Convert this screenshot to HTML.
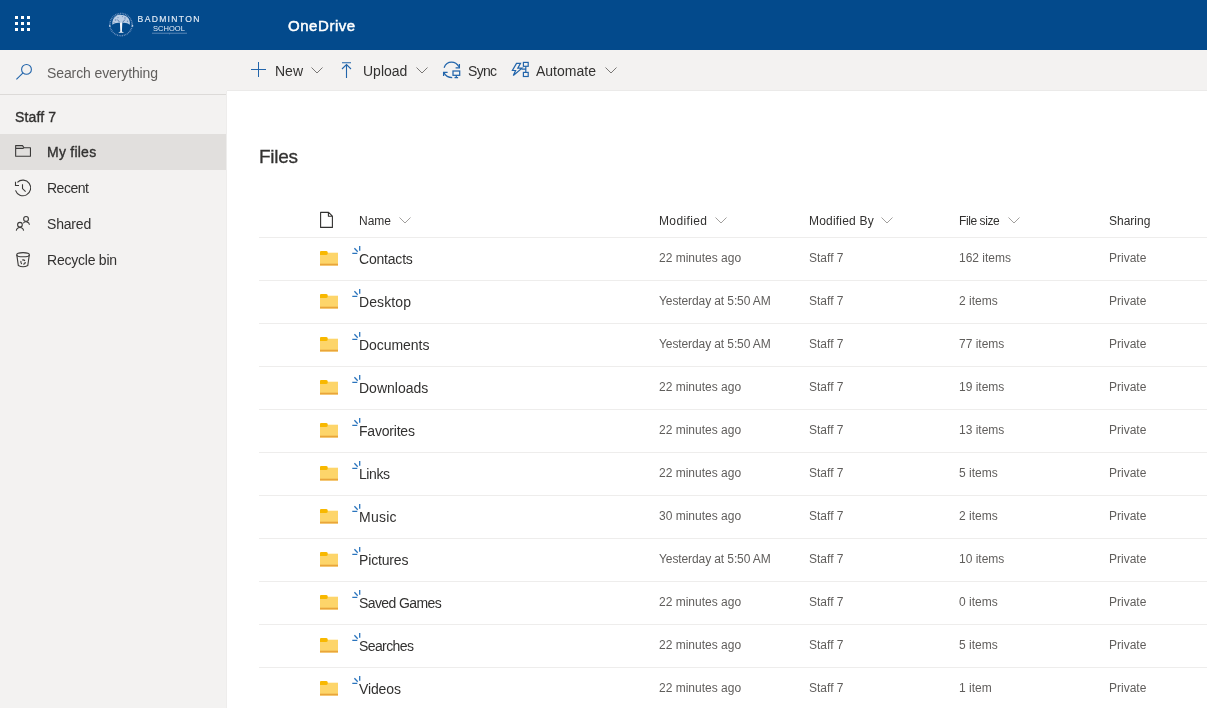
<!DOCTYPE html>
<html><head><meta charset="utf-8">
<style>
*{margin:0;padding:0;box-sizing:border-box}
html,body{width:1207px;height:708px;overflow:hidden;background:#fff;font-family:"Liberation Sans",sans-serif;color:#323130}
.a{position:absolute;white-space:nowrap;line-height:1;-webkit-font-smoothing:antialiased}
body{will-change:transform}
#hdr{position:absolute;left:0;top:0;width:1207px;height:50px;background:#034a8c}
#cmd{position:absolute;left:0;top:50px;width:1207px;height:41px;background:#f3f2f1}
#side{position:absolute;left:0;top:91px;width:227px;height:617px;background:#f3f2f1}
.divl{position:absolute;left:0;top:94px;width:227px;height:1px;background:#dcdad8}
.cbl{position:absolute;left:227px;top:90px;width:980px;height:1px;background:#ebeae9}
.vsh{position:absolute;left:226px;top:91px;width:1px;height:617px;background:#eeedec}
.sel{position:absolute;left:0;top:134px;width:227px;height:36px;background:#e1dfdd}
.t14{font-size:14px}
.t12{font-size:12px}
.sb{-webkit-text-stroke:0.35px #323130}
.sep{position:absolute;left:259px;width:948px;height:1px;background:#eeedec}
.fold{position:absolute;left:320px;width:18px;height:15px}
.spark{position:absolute;left:352px;width:9px;height:9px}
.nm{font-size:14px;color:#323130}
.cell{font-size:12px;color:#605e5c}
</style></head><body>
<div id="hdr"></div>
<div id="cmd"></div>
<div id="side"></div>
<div class="divl"></div>
<div class="sel"></div>
<div class="cbl"></div>
<div class="vsh"></div>

<svg class="a" style="left:15px;top:16px" width="16" height="16" viewBox="0 0 16 16" fill="#fff"><rect x="0" y="0" width="3" height="3"/><rect x="6" y="0" width="3" height="3"/><rect x="12" y="0" width="3" height="3"/><rect x="0" y="6" width="3" height="3"/><rect x="6" y="6" width="3" height="3"/><rect x="12" y="6" width="3" height="3"/><rect x="0" y="12" width="3" height="3"/><rect x="6" y="12" width="3" height="3"/><rect x="12" y="12" width="3" height="3"/></svg>
<svg class="a" style="left:104px;top:8px" width="100" height="34" viewBox="0 0 100 34">
<circle cx="17" cy="16.6" r="11.1" fill="none" stroke="#6f92bf" stroke-width="1.5" stroke-dasharray="0.9 0.8"/>
<circle cx="5.8" cy="17.9" r="0.8" fill="#c8d8ec"/><circle cx="28.5" cy="17.9" r="0.8" fill="#c8d8ec"/>
<path d="M8.3 16.8C7.9 13 9.5 9.5 12 8C14 6.6 16 6.8 17.3 7C19.5 6.6 22 7.5 23.8 9.5C25.6 11.5 26.2 14.2 25.8 16.8C24.2 15.6 22 14.6 19.5 14.7L17.2 15.4L14.8 14.7C12.3 14.6 10 15.6 8.3 16.8Z" fill="#b9cce4"/>
<circle cx="11.5" cy="12" r="0.8" fill="#6688b6"/><circle cx="21" cy="10" r="0.8" fill="#6688b6"/><circle cx="14" cy="9.6" r="0.7" fill="#7393bd"/><circle cx="23.5" cy="13.3" r="0.7" fill="#6a8cba"/><circle cx="10" cy="14.6" r="0.6" fill="#7393bd"/><circle cx="18.5" cy="8.6" r="0.6" fill="#7393bd"/>
<path d="M13.3 11.5L16.2 14.8M21 11.5L18.2 14.8" stroke="#4f76aa" stroke-width="0.9"/>
<path d="M15.9 14.6L16.3 23.4L14.2 24.8H20L17.9 23.4L18.3 14.6Z" fill="#f2f5fa"/>
<text x="33.6" y="13.8" font-family="Liberation Sans" font-size="8.6" fill="#e4ecf6" letter-spacing="1.3" stroke="#e4ecf6" stroke-width="0.15">BADMINTON</text>
<text x="49" y="22.8" font-family="Liberation Sans" font-size="7.5" fill="#e4ecf6" letter-spacing="0.05">SCHOOL</text>
<rect x="48" y="24.8" width="35" height="0.7" fill="#7f9fc7"/><rect x="65.3" y="25.5" width="0.7" height="0.8" fill="#7f9fc7"/>
</svg>
<div class="a" style="left:288px;top:18px;font-size:15px;letter-spacing:0.55px;color:#fff;-webkit-text-stroke:0.5px #fff">OneDrive</div>
<svg class="a" style="left:10px;top:58px" width="30" height="30" viewBox="0 0 30 30" fill="none" stroke="#2265ab" stroke-width="1.1">
<circle cx="16.5" cy="11.4" r="4.9"/><path d="M13 14.9 L6.4 21.4"/></svg>
<div class="a t14" style="left:47px;top:66px;color:#605e5c;letter-spacing:-0.11px">Search everything</div>
<svg class="a" style="left:251px;top:62px" width="15" height="15" viewBox="0 0 15 15" stroke="#2265ab" stroke-width="1" fill="none"><path d="M7.5 0V15M0 7.5H15"/></svg>
<div class="a t14" style="left:275px;top:64px">New</div>
<svg class="a" style="left:311px;top:67px" width="12" height="7" viewBox="0 0 12 7" stroke="#797775" stroke-width="1" fill="none"><path d="M0.5 0.5L6 6L11.5 0.5"/></svg>
<svg class="a" style="left:341px;top:62px" width="11" height="16" viewBox="0 0 11 16" stroke="#2265ab" stroke-width="1.1" fill="none"><path d="M1 0.8H10M5.5 2.5V16M1 7L5.5 2.5L10 7"/></svg>
<div class="a t14" style="left:363px;top:64px">Upload</div>
<svg class="a" style="left:416px;top:67px" width="12" height="7" viewBox="0 0 12 7" stroke="#797775" stroke-width="1" fill="none"><path d="M0.5 0.5L6 6L11.5 0.5"/></svg>
<svg class="a" style="left:438px;top:58px" width="28" height="24" viewBox="0 0 28 24" stroke="#2265ab" stroke-width="1.25" fill="none">
<path d="M6.1 9.7C7.5 6 10.5 4.2 13.6 4.2C16.5 4.2 19.2 5.8 20.9 8.8"/><path d="M21.4 6.1V9.8H17.6"/>
<path d="M9.6 14.4H5.6V18"/><path d="M5.8 14.6C7.5 17.8 10.5 19.5 14.2 19.5"/>
<rect x="15" y="13" width="6.7" height="4.3"/><path d="M18.3 17.3V19.5M16.5 19.5H20.1"/></svg>
<div class="a t14" style="left:468px;top:64px;letter-spacing:-0.67px">Sync</div>
<svg class="a" style="left:508px;top:58px" width="28" height="24" viewBox="0 0 28 24" stroke="#2265ab" stroke-width="1.2" fill="none" stroke-linejoin="miter">
<path d="M8.5 5.4H12.5L9.8 10.2H14L5.3 17.5L7.6 12.5H4.4Z"/>
<rect x="15.4" y="4.4" width="4.8" height="3.9"/><rect x="15.4" y="14.4" width="4.8" height="4.1"/>
<path d="M17.8 8.3V14.4M13.5 11.2H17.8"/></svg>
<div class="a t14" style="left:536px;top:64px">Automate</div>
<svg class="a" style="left:605px;top:67px" width="12" height="7" viewBox="0 0 12 7" stroke="#797775" stroke-width="1" fill="none"><path d="M0.5 0.5L6 6L11.5 0.5"/></svg>
<div class="a sb" style="left:15px;top:110px;font-size:14px;letter-spacing:0.13px">Staff 7</div>
<svg class="a" style="left:10px;top:139px" width="26" height="26" viewBox="0 0 26 26" stroke="#3b3a39" stroke-width="1.1" fill="none" stroke-linejoin="round">
<path d="M5.65 6.6H12.5L14 8.8H20.45V17.3H5.65Z M5.65 9.4H12.8L14 8.8"/></svg>
<div class="a sb" style="left:47px;top:145px;font-size:14px;letter-spacing:0.24px">My files</div>
<svg class="a" style="left:10px;top:175px" width="26" height="26" viewBox="0 0 26 26" stroke="#3b3a39" stroke-width="1.1" fill="none">
<path d="M7.4 7.4A7.8 7.8 0 1 1 5.5 15.4"/><path d="M5.5 6.8V10.5H9"/><path d="M12.5 9.2V13.6L15.6 16.6"/></svg>
<div class="a t14" style="left:47px;top:181px;letter-spacing:-0.5px">Recent</div>
<svg class="a" style="left:10px;top:211px" width="26" height="26" viewBox="0 0 26 26" stroke="#3b3a39" stroke-width="1.1" fill="none">
<circle cx="16.05" cy="7.9" r="2.4"/><path d="M13.2 12.2A3.5 3.5 0 0 1 19.5 13.8"/>
<circle cx="9.95" cy="13.7" r="2.35"/><path d="M6.3 19.6A3.7 3.7 0 0 1 13.6 19.6"/></svg>
<div class="a t14" style="left:47px;top:217px;letter-spacing:-0.18px">Shared</div>
<svg class="a" style="left:10px;top:247px" width="26" height="26" viewBox="0 0 26 26" stroke="#3b3a39" stroke-width="1.1" fill="none">
<ellipse cx="13.05" cy="7.7" rx="6.3" ry="2.1"/><path d="M6.8 7.9L8.3 18.4Q13.05 21 17.8 18.4L19.3 7.9"/>
<circle cx="13.05" cy="15.1" r="2.2" stroke-dasharray="3 1.2"/></svg>
<div class="a t14" style="left:47px;top:253px;letter-spacing:-0.23px">Recycle bin</div>
<div class="a" style="left:259px;top:147px;font-size:19px;letter-spacing:-0.25px;-webkit-text-stroke:0.3px #323130">Files</div>
<svg class="a" style="left:314px;top:206px" width="26" height="26" viewBox="0 0 26 26" stroke="#323130" stroke-width="1.1" fill="none" stroke-linejoin="round">
<path d="M6.6 6.4H14.6L18.4 10.2V21.4H6.6Z M14.4 6.4V10.3H18.4"/></svg>
<div class="a t12" style="left:359px;top:215px">Name</div>
<svg class="a" style="left:399px;top:217px" width="12" height="7" viewBox="0 0 12 7" stroke="#a19f9d" stroke-width="1" fill="none"><path d="M0.5 0.5L6 6L11.5 0.5"/></svg>
<div class="a t12" style="left:659px;top:215px;letter-spacing:0.36px">Modified</div>
<svg class="a" style="left:715px;top:217px" width="12" height="7" viewBox="0 0 12 7" stroke="#a19f9d" stroke-width="1" fill="none"><path d="M0.5 0.5L6 6L11.5 0.5"/></svg>
<div class="a t12" style="left:809px;top:215px;letter-spacing:0.2px">Modified By</div>
<svg class="a" style="left:881px;top:217px" width="12" height="7" viewBox="0 0 12 7" stroke="#a19f9d" stroke-width="1" fill="none"><path d="M0.5 0.5L6 6L11.5 0.5"/></svg>
<div class="a t12" style="left:959px;top:215px;letter-spacing:-0.41px">File size</div>
<svg class="a" style="left:1008px;top:217px" width="12" height="7" viewBox="0 0 12 7" stroke="#a19f9d" stroke-width="1" fill="none"><path d="M0.5 0.5L6 6L11.5 0.5"/></svg>
<div class="a t12" style="left:1109px;top:215px">Sharing</div>
<div class="sep" style="top:237px"></div>
<svg class="fold a" style="top:251px" viewBox="0 0 18 15"><path d="M0 1.7H18V14.5H0Z" fill="#fdd56a"/><path d="M0 1Q0 0 1 0H6.3Q7.8 0 7.8 2Q7.8 4 6.3 4H0Z" fill="#f8b800"/><rect x="0" y="12.7" width="18" height="1.8" fill="#e9a53a"/></svg>
<svg class="spark a" style="top:246px" viewBox="0 0 9 9" stroke="#2a74bd" stroke-width="1.3" fill="none"><path d="M0.3 7.4H5.3M2.4 2.2L5.7 5.7M7.7 0.1V4.7"/></svg>
<div class="a nm" style="left:359px;top:252px;letter-spacing:-0.2px">Contacts</div>
<div class="a cell" style="left:659px;top:252px">22 minutes ago</div>
<div class="a cell" style="left:809px;top:252px">Staff 7</div>
<div class="a cell" style="left:959px;top:252px">162 items</div>
<div class="a cell" style="left:1109px;top:252px">Private</div>
<div class="sep" style="top:280px"></div>
<svg class="fold a" style="top:294px" viewBox="0 0 18 15"><path d="M0 1.7H18V14.5H0Z" fill="#fdd56a"/><path d="M0 1Q0 0 1 0H6.3Q7.8 0 7.8 2Q7.8 4 6.3 4H0Z" fill="#f8b800"/><rect x="0" y="12.7" width="18" height="1.8" fill="#e9a53a"/></svg>
<svg class="spark a" style="top:289px" viewBox="0 0 9 9" stroke="#2a74bd" stroke-width="1.3" fill="none"><path d="M0.3 7.4H5.3M2.4 2.2L5.7 5.7M7.7 0.1V4.7"/></svg>
<div class="a nm" style="left:359px;top:295px;letter-spacing:0.1px">Desktop</div>
<div class="a cell" style="left:659px;top:295px;letter-spacing:-0.1px">Yesterday at 5:50 AM</div>
<div class="a cell" style="left:809px;top:295px">Staff 7</div>
<div class="a cell" style="left:959px;top:295px">2 items</div>
<div class="a cell" style="left:1109px;top:295px">Private</div>
<div class="sep" style="top:323px"></div>
<svg class="fold a" style="top:337px" viewBox="0 0 18 15"><path d="M0 1.7H18V14.5H0Z" fill="#fdd56a"/><path d="M0 1Q0 0 1 0H6.3Q7.8 0 7.8 2Q7.8 4 6.3 4H0Z" fill="#f8b800"/><rect x="0" y="12.7" width="18" height="1.8" fill="#e9a53a"/></svg>
<svg class="spark a" style="top:332px" viewBox="0 0 9 9" stroke="#2a74bd" stroke-width="1.3" fill="none"><path d="M0.3 7.4H5.3M2.4 2.2L5.7 5.7M7.7 0.1V4.7"/></svg>
<div class="a nm" style="left:359px;top:338px;letter-spacing:-0.05px">Documents</div>
<div class="a cell" style="left:659px;top:338px;letter-spacing:-0.1px">Yesterday at 5:50 AM</div>
<div class="a cell" style="left:809px;top:338px">Staff 7</div>
<div class="a cell" style="left:959px;top:338px">77 items</div>
<div class="a cell" style="left:1109px;top:338px">Private</div>
<div class="sep" style="top:366px"></div>
<svg class="fold a" style="top:380px" viewBox="0 0 18 15"><path d="M0 1.7H18V14.5H0Z" fill="#fdd56a"/><path d="M0 1Q0 0 1 0H6.3Q7.8 0 7.8 2Q7.8 4 6.3 4H0Z" fill="#f8b800"/><rect x="0" y="12.7" width="18" height="1.8" fill="#e9a53a"/></svg>
<svg class="spark a" style="top:375px" viewBox="0 0 9 9" stroke="#2a74bd" stroke-width="1.3" fill="none"><path d="M0.3 7.4H5.3M2.4 2.2L5.7 5.7M7.7 0.1V4.7"/></svg>
<div class="a nm" style="left:359px;top:381px">Downloads</div>
<div class="a cell" style="left:659px;top:381px">22 minutes ago</div>
<div class="a cell" style="left:809px;top:381px">Staff 7</div>
<div class="a cell" style="left:959px;top:381px">19 items</div>
<div class="a cell" style="left:1109px;top:381px">Private</div>
<div class="sep" style="top:409px"></div>
<svg class="fold a" style="top:423px" viewBox="0 0 18 15"><path d="M0 1.7H18V14.5H0Z" fill="#fdd56a"/><path d="M0 1Q0 0 1 0H6.3Q7.8 0 7.8 2Q7.8 4 6.3 4H0Z" fill="#f8b800"/><rect x="0" y="12.7" width="18" height="1.8" fill="#e9a53a"/></svg>
<svg class="spark a" style="top:418px" viewBox="0 0 9 9" stroke="#2a74bd" stroke-width="1.3" fill="none"><path d="M0.3 7.4H5.3M2.4 2.2L5.7 5.7M7.7 0.1V4.7"/></svg>
<div class="a nm" style="left:359px;top:424px;letter-spacing:-0.21px">Favorites</div>
<div class="a cell" style="left:659px;top:424px">22 minutes ago</div>
<div class="a cell" style="left:809px;top:424px">Staff 7</div>
<div class="a cell" style="left:959px;top:424px">13 items</div>
<div class="a cell" style="left:1109px;top:424px">Private</div>
<div class="sep" style="top:452px"></div>
<svg class="fold a" style="top:466px" viewBox="0 0 18 15"><path d="M0 1.7H18V14.5H0Z" fill="#fdd56a"/><path d="M0 1Q0 0 1 0H6.3Q7.8 0 7.8 2Q7.8 4 6.3 4H0Z" fill="#f8b800"/><rect x="0" y="12.7" width="18" height="1.8" fill="#e9a53a"/></svg>
<svg class="spark a" style="top:461px" viewBox="0 0 9 9" stroke="#2a74bd" stroke-width="1.3" fill="none"><path d="M0.3 7.4H5.3M2.4 2.2L5.7 5.7M7.7 0.1V4.7"/></svg>
<div class="a nm" style="left:359px;top:467px;letter-spacing:-0.42px">Links</div>
<div class="a cell" style="left:659px;top:467px">22 minutes ago</div>
<div class="a cell" style="left:809px;top:467px">Staff 7</div>
<div class="a cell" style="left:959px;top:467px">5 items</div>
<div class="a cell" style="left:1109px;top:467px">Private</div>
<div class="sep" style="top:495px"></div>
<svg class="fold a" style="top:509px" viewBox="0 0 18 15"><path d="M0 1.7H18V14.5H0Z" fill="#fdd56a"/><path d="M0 1Q0 0 1 0H6.3Q7.8 0 7.8 2Q7.8 4 6.3 4H0Z" fill="#f8b800"/><rect x="0" y="12.7" width="18" height="1.8" fill="#e9a53a"/></svg>
<svg class="spark a" style="top:504px" viewBox="0 0 9 9" stroke="#2a74bd" stroke-width="1.3" fill="none"><path d="M0.3 7.4H5.3M2.4 2.2L5.7 5.7M7.7 0.1V4.7"/></svg>
<div class="a nm" style="left:359px;top:510px;letter-spacing:0.23px">Music</div>
<div class="a cell" style="left:659px;top:510px">30 minutes ago</div>
<div class="a cell" style="left:809px;top:510px">Staff 7</div>
<div class="a cell" style="left:959px;top:510px">2 items</div>
<div class="a cell" style="left:1109px;top:510px">Private</div>
<div class="sep" style="top:538px"></div>
<svg class="fold a" style="top:552px" viewBox="0 0 18 15"><path d="M0 1.7H18V14.5H0Z" fill="#fdd56a"/><path d="M0 1Q0 0 1 0H6.3Q7.8 0 7.8 2Q7.8 4 6.3 4H0Z" fill="#f8b800"/><rect x="0" y="12.7" width="18" height="1.8" fill="#e9a53a"/></svg>
<svg class="spark a" style="top:547px" viewBox="0 0 9 9" stroke="#2a74bd" stroke-width="1.3" fill="none"><path d="M0.3 7.4H5.3M2.4 2.2L5.7 5.7M7.7 0.1V4.7"/></svg>
<div class="a nm" style="left:359px;top:553px;letter-spacing:-0.16px">Pictures</div>
<div class="a cell" style="left:659px;top:553px;letter-spacing:-0.1px">Yesterday at 5:50 AM</div>
<div class="a cell" style="left:809px;top:553px">Staff 7</div>
<div class="a cell" style="left:959px;top:553px">10 items</div>
<div class="a cell" style="left:1109px;top:553px">Private</div>
<div class="sep" style="top:581px"></div>
<svg class="fold a" style="top:595px" viewBox="0 0 18 15"><path d="M0 1.7H18V14.5H0Z" fill="#fdd56a"/><path d="M0 1Q0 0 1 0H6.3Q7.8 0 7.8 2Q7.8 4 6.3 4H0Z" fill="#f8b800"/><rect x="0" y="12.7" width="18" height="1.8" fill="#e9a53a"/></svg>
<svg class="spark a" style="top:590px" viewBox="0 0 9 9" stroke="#2a74bd" stroke-width="1.3" fill="none"><path d="M0.3 7.4H5.3M2.4 2.2L5.7 5.7M7.7 0.1V4.7"/></svg>
<div class="a nm" style="left:359px;top:596px;letter-spacing:-0.59px">Saved Games</div>
<div class="a cell" style="left:659px;top:596px">22 minutes ago</div>
<div class="a cell" style="left:809px;top:596px">Staff 7</div>
<div class="a cell" style="left:959px;top:596px">0 items</div>
<div class="a cell" style="left:1109px;top:596px">Private</div>
<div class="sep" style="top:624px"></div>
<svg class="fold a" style="top:638px" viewBox="0 0 18 15"><path d="M0 1.7H18V14.5H0Z" fill="#fdd56a"/><path d="M0 1Q0 0 1 0H6.3Q7.8 0 7.8 2Q7.8 4 6.3 4H0Z" fill="#f8b800"/><rect x="0" y="12.7" width="18" height="1.8" fill="#e9a53a"/></svg>
<svg class="spark a" style="top:633px" viewBox="0 0 9 9" stroke="#2a74bd" stroke-width="1.3" fill="none"><path d="M0.3 7.4H5.3M2.4 2.2L5.7 5.7M7.7 0.1V4.7"/></svg>
<div class="a nm" style="left:359px;top:639px;letter-spacing:-0.6px">Searches</div>
<div class="a cell" style="left:659px;top:639px">22 minutes ago</div>
<div class="a cell" style="left:809px;top:639px">Staff 7</div>
<div class="a cell" style="left:959px;top:639px">5 items</div>
<div class="a cell" style="left:1109px;top:639px">Private</div>
<div class="sep" style="top:667px"></div>
<svg class="fold a" style="top:681px" viewBox="0 0 18 15"><path d="M0 1.7H18V14.5H0Z" fill="#fdd56a"/><path d="M0 1Q0 0 1 0H6.3Q7.8 0 7.8 2Q7.8 4 6.3 4H0Z" fill="#f8b800"/><rect x="0" y="12.7" width="18" height="1.8" fill="#e9a53a"/></svg>
<svg class="spark a" style="top:676px" viewBox="0 0 9 9" stroke="#2a74bd" stroke-width="1.3" fill="none"><path d="M0.3 7.4H5.3M2.4 2.2L5.7 5.7M7.7 0.1V4.7"/></svg>
<div class="a nm" style="left:359px;top:682px;letter-spacing:-0.12px">Videos</div>
<div class="a cell" style="left:659px;top:682px">22 minutes ago</div>
<div class="a cell" style="left:809px;top:682px">Staff 7</div>
<div class="a cell" style="left:959px;top:682px">1 item</div>
<div class="a cell" style="left:1109px;top:682px">Private</div>
<div class="sep" style="top:710px"></div>
</body></html>
